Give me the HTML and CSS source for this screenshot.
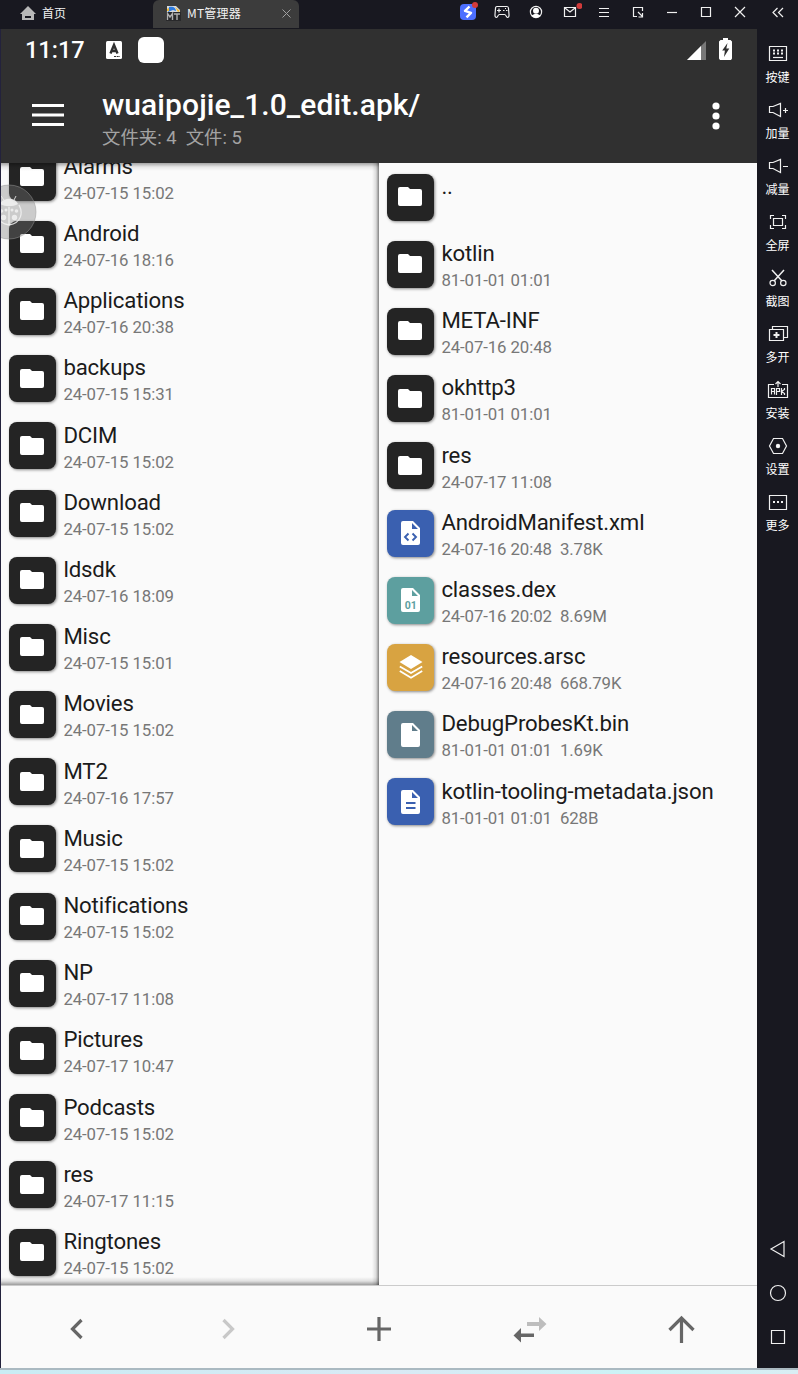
FILE: index.html
```
<!DOCTYPE html>
<html lang="zh-CN">
<head>
<meta charset="utf-8">
<title>MT管理器</title>
<link rel="stylesheet" href="styles.css">
</head>
<body>
<svg class="defs" width="0" height="0">
  <defs>
    <symbol id="folder" viewBox="0 0 24 19"><path fill="#fff" d="M2 0h8l2 2h10a2 2 0 0 1 2 2v13a2 2 0 0 1-2 2H2a2 2 0 0 1-2-2V2a2 2 0 0 1 2-2z"/></symbol>
    <symbol id="page" viewBox="0 0 20 24"><path fill="#fff" fill-rule="evenodd" d="M2 0h10l7 7v15a2 2 0 0 1-2 2H2a2 2 0 0 1-2-2V2a2 2 0 0 1 2-2zM11 2v6h6z"/></symbol>
  </defs>
</svg>
<div class="window">
  <header class="titlebar">
    <div class="tab home">
      <svg width="16" height="15" viewBox="0 0 16 15"><path fill="#b8b8b8" fill-rule="evenodd" d="M8 0l8 8h-2v6H2V8H0zM5 10v2h6v-2z"/></svg>
      <span>首页</span>
    </div>
    <div class="tab active">
      <svg width="15" height="15" viewBox="0 0 15 15"><path fill="#d8dce0" d="M1 0h9l4 4v3H1z"/><path fill="#2d7be0" d="M3 1c3-1 7 0 7 4L7 4 2 6z"/><path fill="#f5b82e" d="M9 1l5 4-2 1zM1 3l2-1v3H1z"/><path fill="#29292b" d="M0 6h15v9H0z"/><path stroke="#b0b0b0" stroke-width="1.4" fill="none" d="M1.500 14V7.500L4 11l2.500-3.500V14M8 8h6M11 8v6"/></svg>
      <span>MT管理器</span>
      <svg class="tab-close" width="9" height="9" viewBox="0 0 9 9"><path stroke="#a0a0a0" d="M.5.5l8 8M8.500.500l-8 8"/></svg>
    </div>
    <div class="tools">
      <svg viewBox="0 0 24 24"><rect x="4" y="4" width="16" height="16" rx="4" fill="#4c6fff"/><path fill="none" stroke="#fff" stroke-width="2.400" stroke-linejoin="round" d="M13.500 6.500L9 10.800l6 2-4.500 4.500"/><circle cx="19" cy="5" r="3" fill="#d23b3b"/></svg>
      <svg viewBox="0 0 24 24"><path d="M7 6.500h10c1 0 1.500.8 1.500 2l.5 6c.2 2-.5 3-1.500 3s-1.500-3-3-3H9.500c-1.500 0-2 3-3 3s-1.700-1-1.500-3l.5-6c0-1.200.5-2 1.500-2z"/><path d="M7 10.500h4M9 8.500v4M13 10.500h1.500M16 10.500h1.500M15 8.500h1"/></svg>
      <svg viewBox="0 0 24 24"><circle cx="12" cy="12" r="5.600"/><circle cx="12" cy="10.800" r="3" fill="#fff" stroke="none"/><path fill="#fff" stroke="none" d="M7.800 15.800c1-2.400 7.400-2.400 8.400 0a5.600 5.600 0 0 1-8.400 0z"/></svg>
      <svg viewBox="0 0 24 24"><path d="M6.500 7.500h11v9h-11zM7 8l5 4 5-4"/><circle cx="21.500" cy="6" r="3" fill="#d23b3b" stroke="none"/></svg>
      <svg viewBox="0 0 24 24"><path d="M7 8.500h10M7 12.500h10M7 16.500h10"/></svg>
      <svg viewBox="0 0 24 24"><path d="M11 16.500H7.500v-9h9V11M12 12l4.500 4.500M16.500 13v4H12.500"/></svg>
      <svg viewBox="0 0 24 24"><path d="M7 12.500h10"/></svg>
      <svg viewBox="0 0 24 24"><path d="M7.500 7.500h9v9h-9z"/></svg>
      <svg viewBox="0 0 24 24"><path d="M7 7l10 10M17 7L7 17"/></svg>
    </div>
    <div class="collapse"><svg viewBox="0 0 24 24"><path d="M11.500 8L7 12.500l4.500 4.500M17 8l-4.500 4.500L17 17"/></svg></div>
  </header>
  <div class="body">
    <main class="app">
      <div class="head">
        <div class="status">
          <span class="clock">11:17</span>
          <svg class="s-a" width="16" height="18" viewBox="0 0 16 18"><rect width="16" height="18" rx="1.500" fill="#fff"/><path fill="none" stroke="#303030" stroke-width="2.400" d="M4.500 12.500L8 4l3.500 8.500M6 10h4"/><path stroke="#303030" d="M8 15.500h6" stroke-dasharray="2 .7"/></svg>
          <span class="s-box"></span>
          <span class="grow"></span>
          <svg class="s-sig" width="19" height="19" viewBox="0 0 19 19"><path fill="#777" d="M19 0v19H0z"/><path fill="#fff" d="M14 5v14H0z"/></svg>
          <svg class="s-bat" width="13" height="22" viewBox="0 0 13 22"><path fill="#fff" d="M4 0h5v2h2.500L13 3.500v17L12 22H1L0 20.500v-17L1.500 2H4z"/><path fill="#303030" d="M8.500 5l-5.300 7.500h2.700L5 19l5.300-8.500H7.300z"/></svg>
        </div>
        <div class="appbar">
          <svg class="menu" width="32" height="24" viewBox="0 0 32 24"><path stroke="#fff" stroke-width="3" d="M0 2.500h32M0 12h32M0 21.500h32"/></svg>
          <div class="heading">
            <div class="path">wuaipojie_1.0_edit.apk/</div>
            <div class="count">文件夹: 4&nbsp; 文件: 5</div>
          </div>
          <svg class="dots" width="8" height="28" viewBox="0 0 8 28"><g fill="#fff"><circle cx="4" cy="4" r="3.600"/><circle cx="4" cy="14" r="3.600"/><circle cx="4" cy="24" r="3.600"/></g></svg>
        </div>
      </div>
      <div class="panes">
        <section class="pane left">
          <div class="list">
            <div class="row"><span class="ic"><svg class="f"><use href="#folder"/></svg></span><div><p>Alarms</p><small>24-07-15 15:02</small></div></div>
            <div class="row"><span class="ic"><svg class="f"><use href="#folder"/></svg></span><div><p>Android</p><small>24-07-16 18:16</small></div></div>
            <div class="row"><span class="ic"><svg class="f"><use href="#folder"/></svg></span><div><p>Applications</p><small>24-07-16 20:38</small></div></div>
            <div class="row"><span class="ic"><svg class="f"><use href="#folder"/></svg></span><div><p>backups</p><small>24-07-15 15:31</small></div></div>
            <div class="row"><span class="ic"><svg class="f"><use href="#folder"/></svg></span><div><p>DCIM</p><small>24-07-15 15:02</small></div></div>
            <div class="row"><span class="ic"><svg class="f"><use href="#folder"/></svg></span><div><p>Download</p><small>24-07-15 15:02</small></div></div>
            <div class="row"><span class="ic"><svg class="f"><use href="#folder"/></svg></span><div><p>ldsdk</p><small>24-07-16 18:09</small></div></div>
            <div class="row"><span class="ic"><svg class="f"><use href="#folder"/></svg></span><div><p>Misc</p><small>24-07-15 15:01</small></div></div>
            <div class="row"><span class="ic"><svg class="f"><use href="#folder"/></svg></span><div><p>Movies</p><small>24-07-15 15:02</small></div></div>
            <div class="row"><span class="ic"><svg class="f"><use href="#folder"/></svg></span><div><p>MT2</p><small>24-07-16 17:57</small></div></div>
            <div class="row"><span class="ic"><svg class="f"><use href="#folder"/></svg></span><div><p>Music</p><small>24-07-15 15:02</small></div></div>
            <div class="row"><span class="ic"><svg class="f"><use href="#folder"/></svg></span><div><p>Notifications</p><small>24-07-15 15:02</small></div></div>
            <div class="row"><span class="ic"><svg class="f"><use href="#folder"/></svg></span><div><p>NP</p><small>24-07-17 11:08</small></div></div>
            <div class="row"><span class="ic"><svg class="f"><use href="#folder"/></svg></span><div><p>Pictures</p><small>24-07-17 10:47</small></div></div>
            <div class="row"><span class="ic"><svg class="f"><use href="#folder"/></svg></span><div><p>Podcasts</p><small>24-07-15 15:02</small></div></div>
            <div class="row"><span class="ic"><svg class="f"><use href="#folder"/></svg></span><div><p>res</p><small>24-07-17 11:15</small></div></div>
            <div class="row"><span class="ic"><svg class="f"><use href="#folder"/></svg></span><div><p>Ringtones</p><small>24-07-15 15:02</small></div></div>
          </div>
          <svg class="bug" width="56" height="58" viewBox="0 0 56 58"><circle cx="28" cy="29" r="27" fill="#777" fill-opacity=".36" stroke="#999" stroke-opacity=".5"/><path fill="none" stroke="#eee" stroke-opacity=".85" d="M23 17l-3-4M33 17l2-4"/><path fill="#f2f2f2" fill-opacity=".85" d="M19 21c3-7 15-7 18 0-5 3-13 3-18 0z"/><path fill="none" stroke="#f2f2f2" stroke-opacity=".85" stroke-width="1.300" d="M18 22c-4 7-3 18 10 20 13-2 14-13 10-20M28 24v18"/><g fill="#f2f2f2" fill-opacity=".85"><circle cx="22.500" cy="34.500" r="2.700"/><circle cx="33.500" cy="34.500" r="2.700"/><circle cx="20.500" cy="28" r="1.800"/><circle cx="35.500" cy="28" r="1.800"/><circle cx="25" cy="27" r="1.500"/><circle cx="31" cy="27" r="1.500"/></g></svg>
        </section>
        <section class="pane right">
          <div class="list">
            <div class="row"><span class="ic"><svg class="f"><use href="#folder"/></svg></span><div><p>..</p></div></div>
            <div class="row"><span class="ic"><svg class="f"><use href="#folder"/></svg></span><div><p>kotlin</p><small>81-01-01 01:01</small></div></div>
            <div class="row"><span class="ic"><svg class="f"><use href="#folder"/></svg></span><div><p>META-INF</p><small>24-07-16 20:48</small></div></div>
            <div class="row"><span class="ic"><svg class="f"><use href="#folder"/></svg></span><div><p>okhttp3</p><small>81-01-01 01:01</small></div></div>
            <div class="row"><span class="ic"><svg class="f"><use href="#folder"/></svg></span><div><p>res</p><small>24-07-17 11:08</small></div></div>
            <div class="row"><span class="ic blue"><svg class="p" viewBox="0 0 20 24"><use href="#page" width="20" height="24"/><path fill="none" stroke="#3a60b0" stroke-width="1.900" d="M7.500 12.500L4 16l3.500 3.500M11.500 12.500L15 16l-3.500 3.500"/></svg></span><div><p>AndroidManifest.xml</p><small>24-07-16 20:48&nbsp; 3.78K</small></div></div>
            <div class="row"><span class="ic teal"><svg class="p" viewBox="0 0 20 24"><use href="#page" width="20" height="24"/><text x="9.700" y="20.500" text-anchor="middle">01</text></svg></span><div><p>classes.dex</p><small>24-07-16 20:02&nbsp; 8.69M</small></div></div>
            <div class="row"><span class="ic gold"><svg width="24" height="24" viewBox="0 0 24 24"><path fill="#fff" d="M12 0l11.500 7L12 14 .5 7z"/><path fill="none" stroke="#fff" stroke-width="1.800" d="M.8 11.500L12 18l11.200-6.500M.8 16L12 22.700 23.200 16"/></svg></span><div><p>resources.arsc</p><small>24-07-16 20:48&nbsp; 668.79K</small></div></div>
            <div class="row"><span class="ic slate"><svg class="p" viewBox="0 0 20 24"><use href="#page" width="20" height="24"/></svg></span><div><p>DebugProbesKt.bin</p><small>81-01-01 01:01&nbsp; 1.69K</small></div></div>
            <div class="row"><span class="ic blue"><svg class="p" viewBox="0 0 20 24"><use href="#page" width="20" height="24"/><path stroke="#3a60b0" stroke-width="2" d="M5 13h9.500M5 18h9.500"/></svg></span><div><p>kotlin-tooling-metadata.json</p><small>81-01-01 01:01&nbsp; 628B</small></div></div>
          </div>
        </section>
      </div>
      <nav class="bottom">
        <span><svg width="36" height="36" viewBox="0 0 36 36"><path fill="none" stroke="#666" stroke-width="3.200" d="M22.500 9l-9 9 9 9"/></svg></span>
        <span><svg width="36" height="36" viewBox="0 0 36 36"><path fill="none" stroke="#c8c8c8" stroke-width="3.200" d="M13.500 9l9 9-9 9"/></svg></span>
        <span><svg width="36" height="36" viewBox="0 0 36 36"><path stroke="#666" stroke-width="3.200" d="M6 18h24M18 6v24"/></svg></span>
        <span><svg width="36" height="36" viewBox="0 0 36 36"><path fill="#bdbdbd" d="M15 11h12V6l7.500 7-7.500 7v-5H15z"/><path fill="#666" d="M22 22.500H9v-5.500l-7.500 7.500L9 31.500V26h13z"/></svg></span>
        <span><svg width="36" height="36" viewBox="0 0 36 36"><path fill="none" stroke="#666" stroke-width="3.200" d="M18.500 32V7M6.500 19l12-12 12 12"/></svg></span>
      </nav>
    </main>
    <aside class="side">
      <div class="item"><svg viewBox="0 0 24 24"><path d="M3.500 4.500h17v14h-17z"/><path stroke-width="1.800" d="M7 8.500h2M11 8.500h2M15 8.500h2M7 11.500h2M11 11.500h2M15 11.500h2"/><path d="M7 15.500h10"/></svg><span>按键</span></div>
      <div class="item"><svg viewBox="0 0 24 24"><path d="M3.500 8.500H7l7.500-3v13l-7.500-4H3.500zM17 12.500h5M19.500 10v5"/></svg><span>加量</span></div>
      <div class="item"><svg viewBox="0 0 24 24"><path d="M3.500 8.500H7l7.500-3v13l-7.500-4H3.500zM17 12.500h5"/></svg><span>减量</span></div>
      <div class="item"><svg viewBox="0 0 24 24"><path d="M7.500 8.500h9v7h-9zM4.500 9V5.500H8M16 5.500h3.500V9M19.500 15v3.500H16M8 18.500H4.500V15"/></svg><span>全屏</span></div>
      <div class="item"><svg viewBox="0 0 24 24"><path stroke-width="1.500" d="M6 4l10 11M18 4L8 15"/><circle cx="6.700" cy="17" r="2.700"/><circle cx="17.300" cy="17" r="2.700"/></svg><span>截图</span></div>
      <div class="item"><svg viewBox="0 0 24 24"><path d="M3.500 7.500h14v11h-14zM6.500 7V4.500h15v11H18"/><path stroke-width="2" d="M7.500 13h6M10.500 10v6"/></svg><span>多开</span></div>
      <div class="item"><svg viewBox="0 0 24 24"><path d="M8 6.500H2.500v13h19v-13H16M12 9V3.500M9.500 6L12 3.500 14.500 6"/><path d="M5.500 16.500v-6h3v6M5.500 13.500h3M10.500 17v-6.500h3v3h-3M15.500 10v7M18.500 10v1.500l-3 2 3 2V17"/></svg><span>安装</span></div>
      <div class="item"><svg viewBox="0 0 24 24"><path d="M7.500 4.500h9l4 7.500-4 7.500h-9L3.500 12z"/><circle cx="12" cy="12" r="1.600" fill="#fff"/></svg><span>设置</span></div>
      <div class="item"><svg viewBox="0 0 24 24"><path d="M3.500 5.500h17v14h-17z"/><path stroke-width="2" d="M7 12h2M11 12h2M15 12h2"/></svg><span>更多</span></div>
      <div class="keys">
        <svg viewBox="0 0 24 24"><path d="M18 4.500v15L5 12z"/></svg>
        <svg viewBox="0 0 24 24"><circle cx="12" cy="12" r="7.500"/></svg>
        <svg viewBox="0 0 24 24"><path d="M5.500 5.500h13v13h-13z"/></svg>
      </div>
    </aside>
  </div>
  <div class="desk"></div>
</div>
</body>
</html>
```
FILE: styles.css
```
* { box-sizing: border-box; }
body { margin: 0; font-family: Roboto, "Noto Sans CJK SC", sans-serif; }
.defs { position: absolute; }
.window { width: 798px; height: 1374px; display: flex; flex-direction: column; background: #181820; overflow: hidden; }
svg { display: block; flex: none; }

.titlebar { height: 29px; display: flex; align-items: stretch; font: 12px/18px "Noto Sans CJK SC", sans-serif; color: #f2f2f2; }
.tab { display: flex; align-items: center; height: 27px; }
.tab span { margin-top: -2px; }
.tab.home { width: 153px; padding-left: 20px; gap: 6px; }
.tab.active { width: 146px; padding: 0 8px 1px 13px; gap: 6px; background: #3c3c3c; border-radius: 6px 6px 0 0; height: 28px; }
.tab.active span { letter-spacing: .2px; }
.tab-close { margin-left: auto; }
.tools { margin-left: 152px; display: grid; grid-template-columns: repeat(9, 34px); justify-items: center; }
.tools svg, .collapse svg, .side svg { width: 24px; height: 24px; fill: none; stroke: #f0f0f0; stroke-width: 1.2; }
.tools svg:first-child { stroke: none; }
.collapse { width: 41px; display: flex; justify-content: center; }

.body { height: 1339px; display: flex; }
.app { width: 757px; border-left: 1px solid #23223c; background: #fafafa; display: flex; flex-direction: column; }
.head { height: 134px; background: #303030; }
.status { height: 42px; display: flex; align-items: center; padding: 0 25px 0 24px; color: #fff; }
.clock { width: 60px; font: 500 23.500px/30px Roboto, sans-serif; }
.s-a { margin-left: 21px; }
.s-box { width: 26px; height: 26px; border-radius: 6px; background: #fff; margin-left: 16px; margin-top: -1px; }
.grow { flex: 1; }
.s-bat { margin: -3px 0 0 13px; }
.s-sig { margin-top: 0; }
.appbar { height: 92px; display: flex; padding: 0 37px 0 31px; }
.menu { margin-top: 32px; }
.heading { margin-left: 38px; flex: 1; }
.path { margin-top: 16px; font: 500 30px/36px Roboto, sans-serif; letter-spacing: .08px; color: #fff; white-space: nowrap; }
.count { font-size: 18.400px; line-height: 24px; margin-top: 3px; color: #a3a3a3; }
.dots { margin-top: 31px; }

.panes { height: 1122px; display: flex; overflow: hidden; }
.pane { position: relative; width: 378px; overflow: hidden; }
.left::after {
  content: ""; position: absolute; inset: 0; pointer-events: none;
  background:
    linear-gradient(to left, rgba(0,0,0,.48), rgba(0,0,0,.12) 3px, transparent 7px),
    linear-gradient(to bottom, rgba(0,0,0,.35), rgba(0,0,0,.08) 4px, transparent 8px),
    linear-gradient(to top, rgba(0,0,0,.38), rgba(0,0,0,.1) 4px, transparent 8px);
}
.list { padding-top: .4px; }
.left .list { margin-top: -20px; }
.row { height: 67.200px; display: flex; gap: 7px; padding: 10.200px 0 0 8.400px; }
.ic { width: 47px; height: 47px; border-radius: 8px; background: #242424; display: flex; align-items: center; justify-content: center; box-shadow: 1px 1px 3px rgba(0,0,0,.45); flex: none; }
.ic .f { width: 24px; height: 19px; margin: -1px 0 0 -1px; }
.ic .p { width: 20px; height: 24px; }
.ic text { font: 700 10.500px Roboto, sans-serif; fill: #5d9f9f; }
.blue { background: #3a60b0; }
.teal { background: #5d9f9f; }
.gold { background: #d8a341; }
.slate { background: #607d8b; }
.row p { margin: -.7px 0 0; font-size: 22.200px; letter-spacing: -.15px; line-height: 27px; color: #1b1b1b; white-space: nowrap; }
.row small { display: block; margin-top: 2px; font-size: 16.800px; letter-spacing: -.1px; line-height: 22px; color: #777; white-space: nowrap; }
.bug { position: absolute; left: -20px; top: 20px; }

.bottom { height: 83px; border-top: 1px solid #cbcbcb; display: grid; grid-template-columns: repeat(5, 1fr); align-items: center; justify-items: center; padding-top: 4px; }

.side { width: 41px; display: flex; flex-direction: column; color: #fff; font: 12px/18px "Noto Sans CJK SC", sans-serif; padding-top: 13px; }
.item { height: 56px; display: flex; flex-direction: column; align-items: center; gap: 2px; }
.keys { margin-top: auto; height: 131px; display: flex; flex-direction: column; gap: 20px; align-items: center; }
.desk { height: 6px; border-top: 2px solid #aab9c1; background: linear-gradient(to right, #c9ecf4, #d9eaf5 50%, #cbf3f6 80%, #d9eef4); }
```
